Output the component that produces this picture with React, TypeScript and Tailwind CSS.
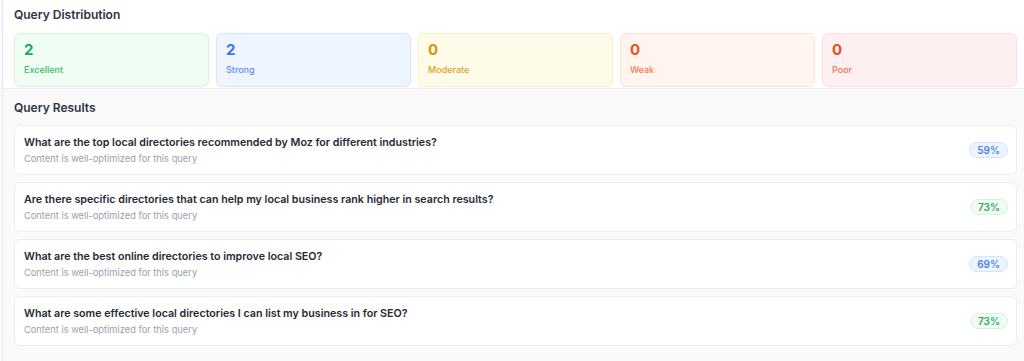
import React from 'react';

const distribution = [
  { count: 2, label: 'Excellent', box: 'bg-[#f0fdf4] border-[#d7f5e0]', num: 'text-[#22a559]', text: 'text-[#3bb96a]' },
  { count: 2, label: 'Strong', box: 'bg-[#eef5ff] border-[#d6e5fd]', num: 'text-[#3b74e8]', text: 'text-[#5b8df0]' },
  { count: 0, label: 'Moderate', box: 'bg-[#fefbe8] border-[#fbefbf]', num: 'text-[#d4930c]', text: 'text-[#d9a233]' },
  { count: 0, label: 'Weak', box: 'bg-[#fff5ee] border-[#fde2d3]', num: 'text-[#e8521c]', text: 'text-[#ef7a50]' },
  { count: 0, label: 'Poor', box: 'bg-[#fef0f0] border-[#fcdede]', num: 'text-[#e5501f]', text: 'text-[#ee6f57]' },
];

const results = [
  { q: 'What are the top local directories recommended by Moz for different industries?', score: 59, tone: 'blue' },
  { q: 'Are there specific directories that can help my local business rank higher in search results?', score: 73, tone: 'green' },
  { q: 'What are the best online directories to improve local SEO?', score: 69, tone: 'blue' },
  { q: 'What are some effective local directories I can list my business in for SEO?', score: 73, tone: 'green' },
];

function ScoreBadge({ score, tone }: { score: number; tone: string }) {
  const cls =
    tone === 'green'
      ? 'bg-[#effcf3] border-[#d3f3dd] text-[#2fa75c]'
      : 'bg-[#edf4ff] border-[#d5e4fd] text-[#4a7ee8]';
  return (
    <span className={`inline-flex items-center justify-center h-[16px] px-[7px] rounded-full border text-[10px] font-semibold leading-none ${cls}`}>
      {score}%
    </span>
  );
}

export default function App() {
  return (
    <div className="h-[361px] bg-[#fafafa] font-['Inter','Liberation_Sans',sans-serif] overflow-hidden">
      <div className="ml-[2px] h-full border-l border-[#e8e8ea]">
        {/* distribution */}
        <section className="bg-white pl-[11px] pr-[7px] pt-[7px] pb-[1px] border-b border-[#f0f0f2]">
          <h2 className="text-[12px] leading-[16px] font-semibold text-[#2f3441]">Query Distribution</h2>
          <div className="mt-[10px] grid grid-cols-5 gap-[7px]">
            {distribution.map((d) => (
              <div key={d.label} className={`h-[54px] rounded-[6px] border pl-[9px] pt-[7px] ${d.box}`}>
                <div className={`text-[15px] leading-[18px] font-bold ${d.num}`}>{d.count}</div>
                <div className={`mt-[4px] text-[9px] leading-[13px] font-medium ${d.text}`}>{d.label}</div>
              </div>
            ))}
          </div>
        </section>

        {/* results */}
        <section className="pl-[11px] pr-[7px] pt-[11px]">
          <h2 className="text-[12px] leading-[16px] font-semibold text-[#2f3441]">Query Results</h2>
          <div className="mt-[9px] flex flex-col gap-[7px]">
            {results.map((r, i) => (
              <div key={i} className="h-[50px] rounded-[6px] border border-[#eceef2] bg-white pl-[9px] pr-[8px] flex items-center justify-between">
                <div>
                  <div className="text-[10.7px] leading-[14px] font-semibold text-[#262a33]">{r.q}</div>
                  <div className="mt-[3px] text-[9.3px] leading-[12px] text-[#9aa0ab]">Content is well-optimized for this query</div>
                </div>
                <ScoreBadge score={r.score} tone={r.tone} />
              </div>
            ))}
          </div>
        </section>
      </div>
    </div>
  );
}
